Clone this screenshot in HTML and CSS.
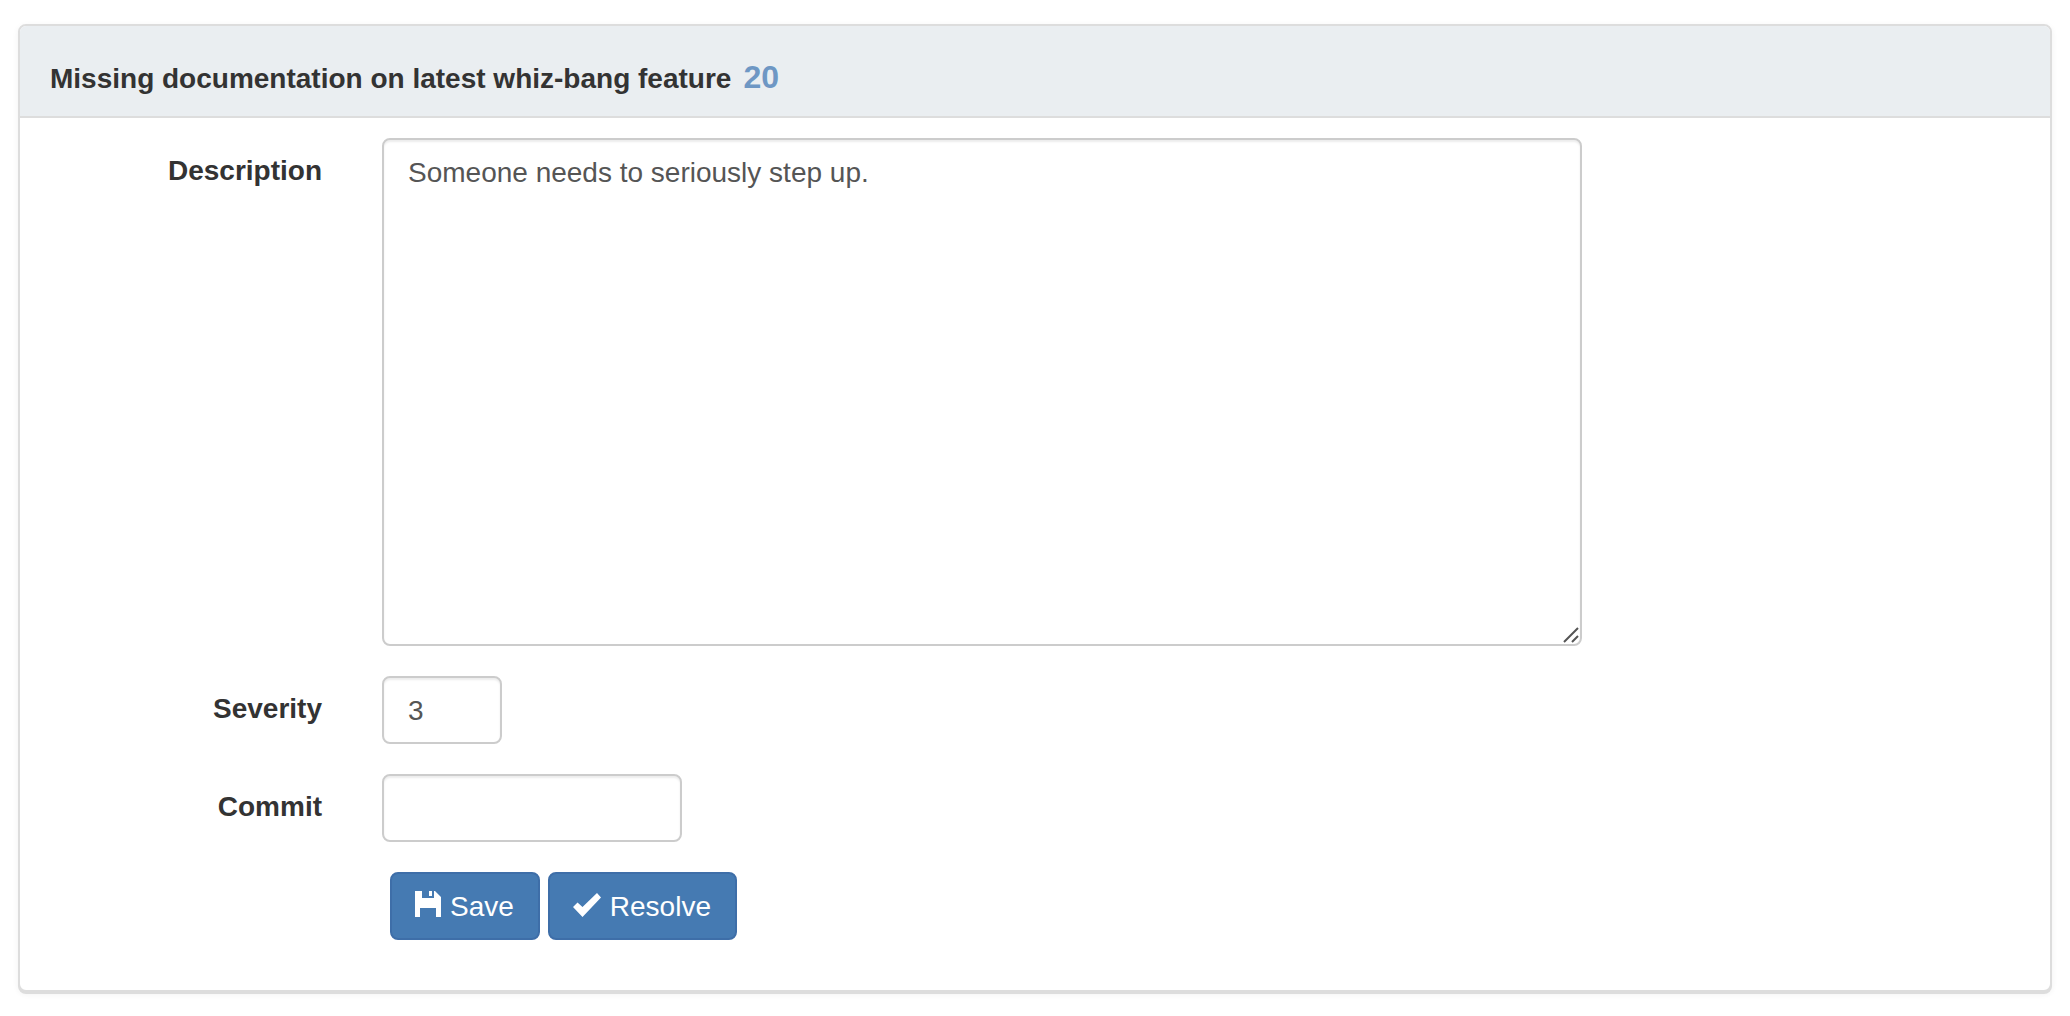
FILE: index.html
```html
<!DOCTYPE html>
<html lang="en">
<head>
<meta charset="utf-8">
<meta name="viewport" content="width=device-width, initial-scale=1">
<title>Missing documentation on latest whiz-bang feature</title>
<link rel="stylesheet" href="styles.css">
</head>
<body>
<main class="panel">
  <header class="panel-heading">
    <h1 class="panel-title">Missing documentation on latest whiz-bang feature</h1>
    <span class="issue-number">20</span>
  </header>
  <form class="panel-body">
    <div class="form-row">
      <label class="form-label" for="description">Description</label>
      <div class="textarea-wrap">
        <textarea class="form-control description" id="description">Someone needs to seriously step up.</textarea>
        <svg class="grip" viewBox="0 0 16 16" aria-hidden="true"><path d="M1 15 15 1M9 15l6-6"/></svg>
      </div>
    </div>
    <div class="form-row">
      <label class="form-label" for="severity">Severity</label>
      <input class="form-control severity" id="severity" type="text" inputmode="numeric" value="3">
    </div>
    <div class="form-row">
      <label class="form-label" for="commit">Commit</label>
      <input class="form-control commit" id="commit" type="text">
    </div>
    <div class="form-row">
      <div class="actions">
        <button class="btn" type="submit">
          <svg class="icon icon-save" viewBox="0 0 26 26" aria-hidden="true"><path d="M0 0h7v7h12V0h1l6 6v20h-5v-9H5v9H0zM14 0h3v5h-3z"/></svg>
          <span>Save</span>
        </button>
        <button class="btn" type="button">
          <svg class="icon icon-check" viewBox="0 0 28 24" aria-hidden="true"><path d="M24 0l4 4.500L9.500 24 0 14 4.500 9.500 9.500 14z"/></svg>
          <span>Resolve</span>
        </button>
      </div>
    </div>
  </form>
</main>
</body>
</html>
```
FILE: styles.css
```css
* {
  box-sizing: border-box;
}

body {
  margin: 0;
  padding: 24px 18px;
  background: #fff;
  color: #333;
  font: 28px/40px "Liberation Sans", Arial, sans-serif;
}

.panel {
  border: 2px solid #ddd;
  border-radius: 8px;
  background: #fff;
  box-shadow: 0 2px 0 #ddd, 0 2px 6px rgba(0, 0, 0, 0.06);
}

.panel-heading {
  display: flex;
  align-items: baseline;
  gap: 12px;
  padding: 31px 30px 17px;
  border-bottom: 2px solid #ddd;
  border-radius: 6px 6px 0 0;
  background: #eaeef1;
}

.panel-title {
  margin: 0;
  font-size: 28px;
  font-weight: bold;
}

.issue-number {
  color: #6e97c4;
  font-size: 32px;
  font-weight: bold;
}

.panel-body {
  display: grid;
  gap: 30px;
  padding: 20px 0 50px;
}

.form-row {
  display: grid;
  grid-template-columns: 302px minmax(0, 1fr);
  column-gap: 60px;
  align-items: start;
  padding-right: 30px;
}

.form-label {
  padding-top: 13px;
  font-weight: bold;
  text-align: right;
}

.form-control {
  display: block;
  width: 100%;
  height: 68px;
  margin: 0;
  padding: 13px 24px 11px;
  border: 2px solid #ccc;
  border-radius: 8px;
  background: #fff;
  box-shadow: inset 0 2px 2px rgba(0, 0, 0, 0.075);
  color: #555;
  font: inherit;
}

.textarea-wrap {
  position: relative;
  max-width: 1200px;
}

.description {
  height: 508px;
  resize: none;
}

.grip {
  position: absolute;
  right: 3px;
  bottom: 3px;
  width: 16px;
  height: 16px;
  fill: none;
  stroke: #555;
  stroke-width: 2;
  pointer-events: none;
}

.severity {
  max-width: 120px;
}

.commit {
  max-width: 300px;
}

.actions {
  display: flex;
  grid-column: 2;
  gap: 8px;
  padding-left: 8px;
}

.btn {
  display: flex;
  align-items: center;
  gap: 9px;
  height: 68px;
  padding: 1px 24px 0 23px;
  border: 2px solid #3e6ea8;
  border-radius: 8px;
  background: #457ab2;
  color: #fff;
  font: inherit;
}

.icon {
  fill: currentColor;
}

.icon-save {
  width: 26px;
  height: 26px;
  margin-bottom: 6px;
}

.icon-check {
  width: 28px;
  height: 24px;
  margin-bottom: 3px;
}
```
